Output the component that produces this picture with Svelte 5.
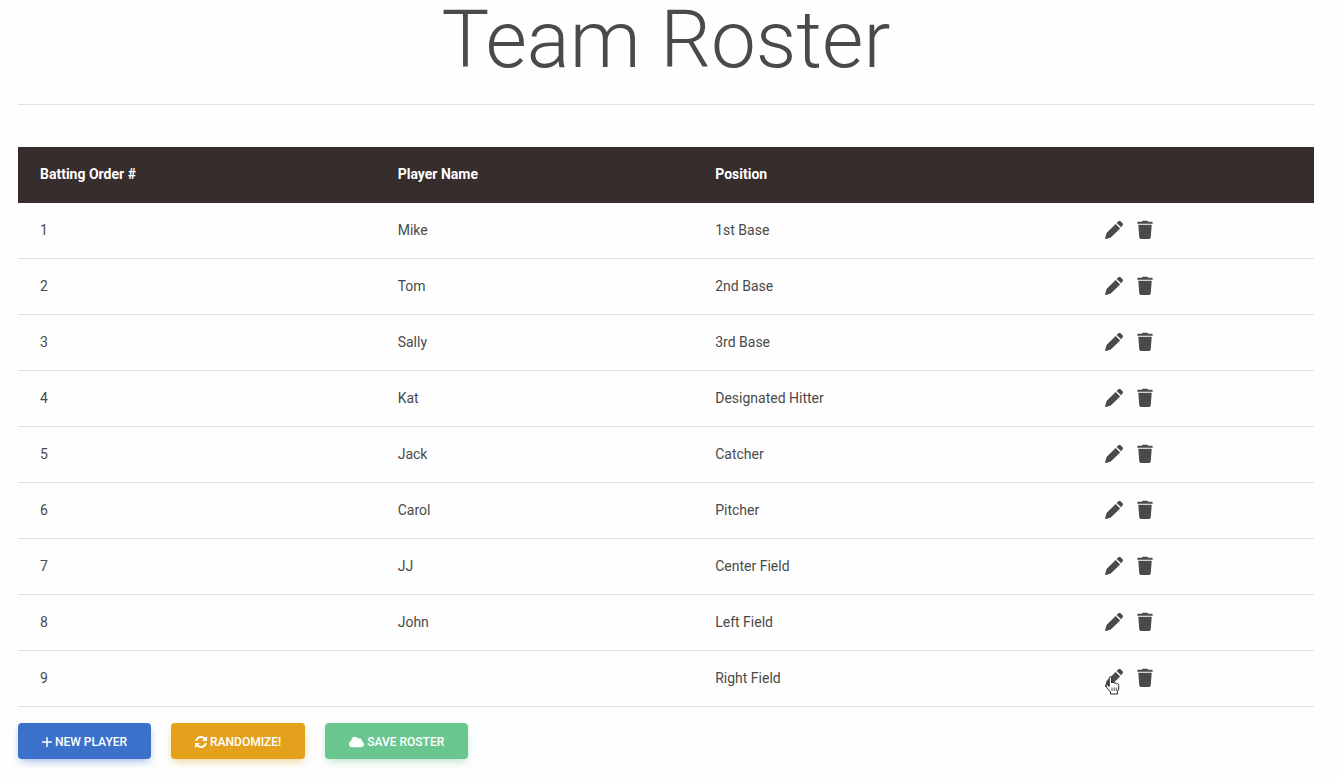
<script>
  const players = [
    { name: 'Mike', position: '1st Base' },
    { name: 'Tom', position: '2nd Base' },
    { name: 'Sally', position: '3rd Base' },
    { name: 'Kat', position: 'Designated Hitter' },
    { name: 'Jack', position: 'Catcher' },
    { name: 'Carol', position: 'Pitcher' },
    { name: 'JJ', position: 'Center Field' },
    { name: 'John', position: 'Left Field' },
    { name: '', position: 'Right Field' }
  ];
</script>

<main>
  <h1>Team Roster</h1>
  <hr />
  <table>
    <colgroup>
      <col class="order" /><col class="name" /><col class="position" /><col />
    </colgroup>
    <thead>
      <tr>
        <th scope="col">Batting Order #</th>
        <th scope="col">Player Name</th>
        <th scope="col">Position</th>
        <td></td>
      </tr>
    </thead>
    <tbody>
      {#each players as player, i}
        <tr>
          <td>{i + 1}</td>
          <td>{player.name}</td>
          <td>{player.position}</td>
          <td>
            <div class="actions">
              <button class="icon" aria-label="Edit player">
                <svg width="18" height="20" viewBox="0 0 18 20">
                  <path d="M10.600 3.900 15.100 8.400 5.800 17.500 1.100 18.900Q0 19.200.2 18.100L1.500 13.100ZM11.600 2.900 13.200 1.400Q14.500.2 15.800 1.400L17.400 3Q18.600 4.300 17.400 5.600L16 7.300Z" />
                </svg>
                {#if i === players.length - 1}
                  <svg class="pointer" width="16" height="19" viewBox="0 0 16 19">
                    <path class="hand" d="M4.200 10.500V2.200Q4.200.8 5.400.8T6.600 2.200V7Q7 6 8 6.200T9 7.300Q9.500 6.500 10.400 6.800T11.400 8Q12 7.300 12.800 7.700T13.700 9.200V13L12.400 15.500V18H5.500V16L2.100 12.200 1 9.700Q1 8.300 2.500 8.900Z" />
                    <path class="lines" d="M7 11.500V15M9.200 11.500V15M11.300 11.500V15" />
                  </svg>
                {/if}
              </button>
              <button class="icon" aria-label="Delete player">
                <svg width="16" height="20" viewBox="0 0 16 20">
                  <path d="M1 1.700H4.900L5.600.7H10.400L11.100 1.700H15Q15.700 1.700 15.700 2.400V3.700H.3V2.400Q.3 1.700 1 1.700ZM1.300 4.700H14.700L13.700 17.600Q13.600 19 12.200 19H3.800Q2.400 19 2.300 17.600Z" />
                </svg>
              </button>
            </div>
          </td>
        </tr>
      {/each}
    </tbody>
  </table>
  <div class="toolbar">
    <button class="btn new">
      <svg width="10" height="10" viewBox="0 0 10 10"><path d="M5 .6V9.400M.6 5H9.400" fill="none" stroke="currentColor" stroke-width="1.500" stroke-linecap="round" /></svg>
      New Player
    </button>
    <button class="btn random">
      <svg width="12" height="12" viewBox="0 0 1536 1536"><path d="M1511 928q0 5-1 7-64 268-268 434.500t-478 166.500q-146 0-282.500-55t-243.500-157l-129 129q-19 19-45 19t-45-19-19-45v-448q0-26 19-45t45-19h448q26 0 45 19t19 45-19 45l-137 137q71 66 161 102t187 36q134 0 250-65t186-179q11-17 53-117 8-23 30-23h192q13 0 22.500 9.500t9.500 22.500zm25-800v448q0 26-19 45t-45 19h-448q-26 0-45-19t-19-45 19-45l138-138q-148-137-349-137-134 0-250 65t-186 179q-11 17-53 117-8 23-30 23h-199q-13 0-22.500-9.500t-9.500-22.500v-7q65-268 270-434.500t480-166.500q146 0 284 55.500t245 156.500l130-129q19-19 45-19t45 19 19 45z" /></svg>
      Randomize!
    </button>
    <button class="btn save">
      <svg width="15" height="12" viewBox="0 0 640 512"><path d="M537.6 226.600c4.100-10.700 6.400-22.400 6.400-34.600 0-53-43-96-96-96-19.700 0-38.100 6-53.300 16.200C367 64.200 315.300 32 256 32c-88.400 0-160 71.600-160 160 0 2.700.1 5.400.2 8.100C40.200 219.800 0 273.200 0 336c0 79.500 64.500 144 144 144h368c70.700 0 128-57.300 128-128 0-61.900-44-113.600-102.400-125.400z" /></svg>
      Save Roster
    </button>
  </div>
</main>

<style>
  :global(body) {
    margin: 0;
    background: #fefefe;
  }
  main {
    padding: 0 26px 18px 18px;
    font-family: Roboto, sans-serif;
    font-size: 14px;
    line-height: 24px;
    color: #4a4a4a;
  }
  h1 {
    margin: 0;
    padding-bottom: 24px;
    font-size: 80px;
    font-weight: 300;
    line-height: 80px;
    text-align: center;
  }
  hr {
    margin: 0 0 42px;
    border: 0;
    border-top: 1px solid #e0e0e0;
  }
  table {
    width: 100%;
    table-layout: fixed;
    border-collapse: separate;
    border-spacing: 0;
  }
  .order {
    width: 27.6%;
  }
  .name {
    width: 24.5%;
  }
  .position {
    width: 30.1%;
  }
  th,
  td {
    box-sizing: border-box;
    height: 56px;
    padding: 0 22px 2px;
    text-align: left;
    border-bottom: 1px solid #e0e0e0;
  }
  thead th,
  thead td {
    background: #362d2c;
    border-color: #362d2c;
    color: #fff;
    font-weight: 700;
  }
  .actions {
    display: flex;
    gap: 14px;
  }
  button {
    border: 0;
    font-family: inherit;
    cursor: pointer;
  }
  svg {
    display: block;
    flex: none;
    fill: currentColor;
  }
  .icon {
    position: relative;
    padding: 0;
    background: none;
    color: #4a4a4a;
  }
  .pointer {
    position: absolute;
    left: 0;
    top: 8px;
  }
  .hand {
    fill: #fff;
    stroke: #222;
  }
  .lines {
    fill: none;
    stroke: #555;
  }
  .toolbar {
    display: flex;
    flex-wrap: wrap;
    gap: 20px;
    padding-top: 16px;
  }
  .btn {
    display: flex;
    align-items: center;
    gap: 3px;
    padding: 10px 24px 8px;
    border-radius: 4px;
    color: #fff;
    font-size: 12px;
    font-weight: 500;
    line-height: 18px;
    text-transform: uppercase;
  }
  .new {
    background: #3b71ca;
    box-shadow: 0 4px 8px -2px #3b71ca80;
  }
  .random {
    background: #e4a11b;
    box-shadow: 0 4px 8px -2px #e4a11b80;
  }
  .save {
    background: #69c68e;
    box-shadow: 0 4px 8px -2px #69c68e80;
  }
</style>
